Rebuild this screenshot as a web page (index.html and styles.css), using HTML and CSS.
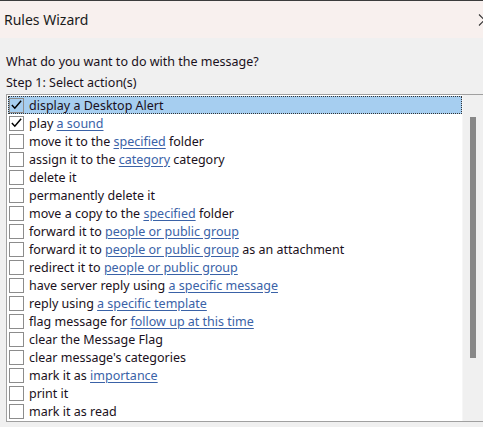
FILE: index.html
```html
<!DOCTYPE html>
<html>
<head>
<meta charset="utf-8">
<link rel="stylesheet" href="styles.css">
</head>
<body>
<div class="window">
  <div class="titlebar">
    <span class="title">Rules Wizard</span>
    <svg class="close" width="10" height="12" viewBox="0 0 10 12"><path d="M1 0.5 L6.5 6 L1 11.5" fill="none" stroke="#333" stroke-width="1.1"/></svg>
  </div>
  <div class="content">
    <div class="question">What do you want to do with the message?</div>
    <div class="step">Step 1: Select action(s)</div>
    <div class="listbox">
      <ul class="list">
        <li class="row selected"><span class="box checked"><svg width="14" height="14" viewBox="0 0 14 14"><path d="M2 7 L5.2 10.5 L12 2.5" fill="none" stroke="#000" stroke-width="1.6"/></svg></span>display a Desktop Alert</li>
        <li class="row"><span class="box checked"><svg width="14" height="14" viewBox="0 0 14 14"><path d="M2 7 L5.2 10.5 L12 2.5" fill="none" stroke="#000" stroke-width="1.6"/></svg></span>play&nbsp;<a>a sound</a></li>
        <li class="row"><span class="box"></span>move it to the&nbsp;<a>specified</a>&nbsp;folder</li>
        <li class="row"><span class="box"></span>assign it to the&nbsp;<a>category</a>&nbsp;category</li>
        <li class="row"><span class="box"></span>delete it</li>
        <li class="row"><span class="box"></span>permanently delete it</li>
        <li class="row"><span class="box"></span>move a copy to the&nbsp;<a>specified</a>&nbsp;folder</li>
        <li class="row"><span class="box"></span>forward it to&nbsp;<a>people or public group</a></li>
        <li class="row"><span class="box"></span>forward it to&nbsp;<a>people or public group</a>&nbsp;as an attachment</li>
        <li class="row"><span class="box"></span>redirect it to&nbsp;<a>people or public group</a></li>
        <li class="row"><span class="box"></span>have server reply using&nbsp;<a>a specific message</a></li>
        <li class="row"><span class="box"></span>reply using&nbsp;<a>a specific template</a></li>
        <li class="row"><span class="box"></span>flag message for&nbsp;<a>follow up at this time</a></li>
        <li class="row"><span class="box"></span>clear the Message Flag</li>
        <li class="row"><span class="box"></span>clear message's categories</li>
        <li class="row"><span class="box"></span>mark it as&nbsp;<a>importance</a></li>
        <li class="row"><span class="box"></span>print it</li>
        <li class="row"><span class="box"></span>mark it as read</li>
      </ul>
      <div class="scrollbar"><div class="thumb"></div></div>
    </div>
  </div>
</div>
</body>
</html>
```

FILE: styles.css
```css
html, body {
  margin: 0;
  padding: 0;
  background: #f0f0f0;
  overflow: hidden;
}
body {
  width: 483px;
  height: 427px;
  font-family: "Noto Sans", "Open Sans", sans-serif;
  color: #1a1020;
}
.window {
  width: 483px;
  height: 427px;
  display: flex;
  flex-direction: column;
}
.titlebar {
  height: 37px;
  border-top: 1px solid #3c3c3c;
  background: #f8f0ee;
  display: flex;
  align-items: center;
  justify-content: space-between;
  box-sizing: content-box;
}
.title {
  font-size: 14px;
  padding-left: 4px;
  color: #1b1b1b;
}
.close {
  margin-right: -5px;
  margin-top: 1px;
}
.content {
  padding-left: 6px;
  display: flex;
  flex-direction: column;
}
.question {
  font-size: 12.5px;
  line-height: 16px;
  margin-top: 16px;
  color: #1a1020;
}
.step {
  font-size: 12.5px;
  line-height: 16px;
  margin-top: 5px;
  color: #1a1020;
}
.listbox {
  margin-top: 3px;
  height: 326px;
  border-top: 1px solid #a0a0a0;
  border-left: 1px solid #a0a0a0;
  border-bottom: 1px solid #a0a0a0;
  background: #fff;
  display: flex;
}
.list {
  list-style: none;
  margin: 0;
  padding: 1px 0 0 1px;
  width: 454px;
}
.row {
  height: 18px;
  display: flex;
  align-items: center;
  font-size: 12.5px;
  white-space: nowrap;
  box-sizing: border-box;
  padding-left: 1px;
}
.row.selected {
  background: #a6cef0;
  outline: 1px dotted #333;
  outline-offset: -1px;
}
.box {
  width: 15px;
  height: 15px;
  box-sizing: border-box;
  border: 1px solid #8c8c8c;
  margin-right: 5px;
  display: flex;
  align-items: center;
  justify-content: center;
  flex: none;
}
.row a {
  color: #3a62a7;
  text-decoration: underline;
  text-underline-offset: 2px;
}
.scrollbar {
  flex: 1;
  background: #f0f0f0;
  position: relative;
  border-left: 1px solid #f6f6f6;
}
.thumb {
  position: absolute;
  left: 7px;
  top: 22px;
  width: 6px;
  height: 241px;
  background: #888;
}
```
